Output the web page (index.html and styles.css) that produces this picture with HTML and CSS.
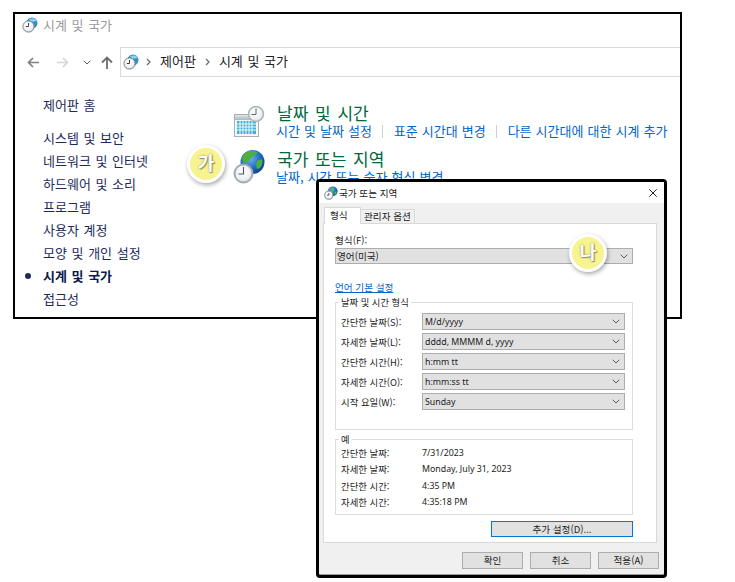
FILE: index.html
```html
<!DOCTYPE html>
<html lang="ko">
<head>
<meta charset="utf-8">
<title>시계 및 국가</title>
<link rel="stylesheet" href="styles.css">
</head>
<body>
<svg class="defs" width="0" height="0" aria-hidden="true">
  <defs>
    <radialGradient id="clockFace" cx="45%" cy="40%" r="65%"><stop offset="0" stop-color="#ffffff"/><stop offset="0.7" stop-color="#eceef0"/><stop offset="1" stop-color="#c4cacf"/></radialGradient>
    <radialGradient id="globeFill" cx="40%" cy="35%" r="70%"><stop offset="0" stop-color="#6fb6ee"/><stop offset="0.6" stop-color="#1f6cc4"/><stop offset="1" stop-color="#0c3c86"/></radialGradient>
    <linearGradient id="calHead" x1="0" y1="0" x2="0" y2="1"><stop offset="0" stop-color="#dfe6ea"/><stop offset="1" stop-color="#a9b8c0"/></linearGradient>
    <symbol id="miniClock" viewBox="0 0 16 16">
      <circle cx="10" cy="6" r="5.500" fill="#2f8fc4"/>
      <path d="M7 2.500a5.500 5.500 0 0 1 8 1.500L9 5z" fill="#8fd0ec"/>
      <circle cx="6.500" cy="9.500" r="5.600" fill="url(#clockFace)" stroke="#7d8588" stroke-width="1"/>
      <path d="M6.500 6v3.500H3.800" fill="none" stroke="#3c4347" stroke-width="1"/>
    </symbol>
    <symbol id="miniGlobe" viewBox="0 0 16 16">
      <circle cx="10" cy="6" r="5.500" fill="url(#globeFill)"/>
      <path d="M7 2.500c2-1 4-1 5 0l-2 2.500-2 .5zM12 7l2.500-1-.5 3-2 1z" fill="#58b548"/>
      <circle cx="5.500" cy="10.500" r="4.700" fill="url(#clockFace)" stroke="#7d8588" stroke-width="1"/>
      <path d="M5.500 8v2.500H3.500" fill="none" stroke="#3c4347" stroke-width="1"/>
    </symbol>
    <symbol id="chev" viewBox="0 0 8 5">
      <path d="M.7.700 4 4 7.300.700" fill="none" stroke="#5a5a5a" stroke-width="1"/>
    </symbol>
  </defs>
</svg>

<main class="canvas">
  <section class="panel-window">
    <header class="titlebar">
      <svg class="icon16" width="16" height="16"><use href="#miniClock"/></svg>
      <span class="title-text">시계 및 국가</span>
    </header>
    <nav class="navbar">
      <svg class="nav-arrow" width="12" height="11" viewBox="0 0 12 11"><path d="M12 5.500H2M6 1 1.500 5.500 6 10" fill="none" stroke="#808080" stroke-width="1.700"/></svg>
      <svg class="nav-arrow fwd" width="12" height="11" viewBox="0 0 12 11"><path d="M0 5.500h10M6 1l4.500 4.500L6 10" fill="none" stroke="#d6d6d6" stroke-width="1.700"/></svg>
      <svg class="nav-drop" width="8" height="5"><use href="#chev"/></svg>
      <svg class="nav-up" width="12" height="13" viewBox="0 0 12 13"><path d="M6 13V2M1 6.500l5-5 5 5" fill="none" stroke="#6e6e6e" stroke-width="1.800"/></svg>
      <div class="address">
        <svg class="icon16" width="16" height="16"><use href="#miniClock"/></svg>
        <svg class="crumb-sep" width="5" height="8" viewBox="0 0 5 8"><path d="M1 1l3 3-3 3" fill="none" stroke="#707070" stroke-width="1.300"/></svg>
        <span class="crumb">제어판</span>
        <svg class="crumb-sep" width="5" height="8" viewBox="0 0 5 8"><path d="M1 1l3 3-3 3" fill="none" stroke="#707070" stroke-width="1.300"/></svg>
        <span class="crumb">시계 및 국가</span>
      </div>
    </nav>
    <div class="panel-body">
      <aside class="sidebar">
        <a class="side-home">제어판 홈</a>
        <a class="side-item">시스템 및 보안</a>
        <a class="side-item">네트워크 및 인터넷</a>
        <a class="side-item">하드웨어 및 소리</a>
        <a class="side-item">프로그램</a>
        <a class="side-item">사용자 계정</a>
        <a class="side-item">모양 및 개인 설정</a>
        <a class="side-item current">시계 및 국가</a>
        <a class="side-item">접근성</a>
      </aside>
      <div class="categories">
        <div class="category">
          <svg class="cat-icon" width="34" height="36" viewBox="0 0 34 36">
            <rect x="1.500" y="11.500" width="24" height="22" fill="#f4f6f7" stroke="#a9afb2"/>
            <rect x="2" y="12" width="23" height="5" fill="url(#calHead)"/>
            <rect x="4" y="18" width="19" height="13" fill="#38b3d6"/>
            <path d="M7 18v13M10 18v13M13 18v13M16 18v13M19 18v13M4 21h19M4 24h19M4 27h19" stroke="#f4f6f7" stroke-width="1"/>
            <circle cx="23" cy="11" r="7.500" fill="url(#clockFace)" stroke="#aeb5ba" stroke-width="1.500"/>
            <path d="M23 5.500V11.500H18.500" fill="none" stroke="#5c6468" stroke-width="1"/>
          </svg>
          <div class="cat-text">
            <h2 class="cat-title">날짜 및 시간</h2>
            <div class="cat-links">
              <a>시간 및 날짜 설정</a><i class="sep"></i><a>표준 시간대 변경</a><i class="sep"></i><a>다른 시간대에 대한 시계 추가</a>
            </div>
          </div>
        </div>
        <div class="category">
          <svg class="cat-icon" width="34" height="36" viewBox="0 0 34 36">
            <circle cx="19.500" cy="13" r="12" fill="url(#globeFill)"/>
            <path d="M11 5c4-4 11-4 14-1-2 1-3 3-6 3 1 3-3 3-4 6-1 1-3 1-5 0-1-3-1-5 1-8zM24 12l5-2c1 3 0 6-2 9l-3 1c-1-3-1-6 0-8z" fill="#4faf3c"/>
            <circle cx="10.500" cy="24.500" r="9" fill="url(#clockFace)" stroke="#a4acb1" stroke-width="2"/>
            <path d="M10.500 18V25H5.500" fill="none" stroke="#4c5458" stroke-width="1.100"/>
          </svg>
          <div class="cat-text">
            <h2 class="cat-title">국가 또는 지역</h2>
            <div class="cat-links"><a>날짜, 시간 또는 숫자 형식 변경</a></div>
          </div>
        </div>
      </div>
    </div>
  </section>

  <section class="dialog">
    <header class="dlg-title">
      <svg class="icon14" width="14" height="14"><use href="#miniGlobe"/></svg>
      <span class="dlg-caption">국가 또는 지역</span>
      <svg class="dlg-close" width="8" height="8" viewBox="0 0 8 8"><path d="M.3.300l7.400 7.400M7.700.300L.3 7.700" stroke="#222" stroke-width="1"/></svg>
    </header>
    <div class="dlg-body">
      <div class="tabs">
        <span class="tab active">형식</span>
        <span class="tab">관리자 옵션</span>
      </div>
      <div class="tab-panel">
        <label class="fmt-label">형식(F):</label>
        <div class="combo wide"><span>영어(미국)</span><svg width="8" height="5"><use href="#chev"/></svg></div>
        <a class="lang-link">언어 기본 설정</a>
        <fieldset class="group fmt-group">
          <legend>날짜 및 시간 형식</legend>
          <div class="fmt-row"><span class="k">간단한 날짜(S):</span><div class="combo"><span class="v">M/d/yyyy</span><svg width="8" height="5"><use href="#chev"/></svg></div></div>
          <div class="fmt-row"><span class="k">자세한 날짜(L):</span><div class="combo"><span class="v">dddd, MMMM d, yyyy</span><svg width="8" height="5"><use href="#chev"/></svg></div></div>
          <div class="fmt-row"><span class="k">간단한 시간(H):</span><div class="combo"><span class="v">h:mm tt</span><svg width="8" height="5"><use href="#chev"/></svg></div></div>
          <div class="fmt-row"><span class="k">자세한 시간(O):</span><div class="combo"><span class="v">h:mm:ss tt</span><svg width="8" height="5"><use href="#chev"/></svg></div></div>
          <div class="fmt-row"><span class="k">시작 요일(W):</span><div class="combo"><span class="v">Sunday</span><svg width="8" height="5"><use href="#chev"/></svg></div></div>
        </fieldset>
        <fieldset class="group ex-group">
          <legend>예</legend>
          <div class="ex-row"><span class="k">간단한 날짜:</span><span class="v">7/31/2023</span></div>
          <div class="ex-row"><span class="k">자세한 날짜:</span><span class="v">Monday, July 31, 2023</span></div>
          <div class="ex-row"><span class="k">간단한 시간:</span><span class="v">4:35 PM</span></div>
          <div class="ex-row"><span class="k">자세한 시간:</span><span class="v">4:35:18 PM</span></div>
        </fieldset>
        <div class="extra-row"><button class="btn extra">추가 설정(D)...</button></div>
      </div>
      <div class="dlg-actions">
        <button class="btn">확인</button>
        <button class="btn">취소</button>
        <button class="btn">적용(A)</button>
      </div>
    </div>
  </section>

  <span class="badge badge-ga">가</span>
  <span class="badge badge-na">나</span>
</main>
</body>
</html>
```

FILE: styles.css
```css
* { box-sizing: border-box; }
html, body { margin: 0; padding: 0; background: #fff; }
body { font-family: "Noto Sans CJK KR", sans-serif; color: #111; overflow: hidden; }
.defs { position: absolute; }
.canvas { position: relative; width: 735px; height: 582px; overflow: hidden; }

/* control panel window */
.panel-window {
  position: absolute; left: 13px; top: 12px; width: 669px; height: 307px;
  border: 2px solid #000; background: #fff;
  font-size: 13px; word-spacing: 1px;
}
.titlebar { height: 33px; display: flex; align-items: center; padding: 0 0 11px 7px; gap: 5px; }
.title-text { color: #9a9a9a; line-height: 20px; }
.icon16 { display: block; flex: none; }
.navbar { height: 30px; display: flex; align-items: center; padding-left: 12px; }
.nav-arrow { margin-right: 18px; flex: none; }
.nav-arrow.fwd { margin-right: 14px; }
.nav-drop { margin-right: 10px; flex: none; }
.nav-up { flex: none; margin-right: 7px; }
.address {
  flex: 1; height: 30px; border: 1px solid #d9d9d9; border-right: 0;
  display: flex; align-items: center; padding-left: 2px; color: #222;
}
.crumb { line-height: 20px; padding-bottom: 2px; }
.crumb-sep { flex: none; margin: 0 9px 0 7px; }
.crumb + .crumb-sep { margin-left: 9px; }
.panel-body { display: grid; grid-template-columns: 218px 1fr; }
.sidebar { padding: 16px 0 0 28px; display: flex; flex-direction: column; }
.sidebar a { line-height: 23px; color: #1c2a5c; white-space: nowrap; }
.side-home { margin-bottom: 10px; }
.sidebar .current { font-weight: 700; color: #0b1a4a; }
.current::before {
  content: ""; display: inline-block; width: 6px; height: 6px; border-radius: 50%;
  background: #1c2a5c; margin: 0 12px 2px -18px; vertical-align: middle;
}
.categories { padding-top: 26px; display: flex; flex-direction: column; gap: 10px; }
.category { display: flex; gap: 10px; }
.cat-icon { flex: none; }
.cat-text { min-width: 0; }
.cat-title { margin: 0; font-size: 17px; font-weight: 400; line-height: 20px; color: #00683a; word-spacing: 2px; }
.cat-links { display: flex; align-items: center; line-height: 16px; color: #0066cc; white-space: nowrap; word-spacing: .4px; margin-left: -1px; }
.sep { display: block; width: 1px; height: 13px; background: #cfcfcf; margin: 0 10.500px; }

/* dialog */
.dialog {
  position: absolute; left: 316px; top: 179px; width: 351px; height: 399px;
  border: 3px solid #000; border-radius: 4px; background: #f0f0f0;
  box-shadow: inset 0 -1px 0 #9a9a9a;
  font-size: 9.600px; line-height: 14px; color: #222;
  display: flex; flex-direction: column;
}
.dlg-title { height: 21px; background: #fff; flex: none; display: flex; align-items: center; padding: 0 7px 0 5px; gap: 1px; }
.icon14 { display: block; flex: none; }
.dlg-caption { flex: 1; }
.dlg-close { flex: none; }
.dlg-body { flex: 1; padding: 5px 7px 0 4px; display: flex; flex-direction: column; }
.tabs { display: flex; align-items: flex-end; height: 15px; padding-left: 1px; flex: none; position: relative; z-index: 1; }
.tab { height: 14px; padding: 0 3px; border: 1px solid #d9d9d9; border-bottom: 0; background: #f0f0f0; line-height: 13px; margin-left: -1px; }
.tab.active { height: 17px; width: 37px; padding: 1px 0 0 5px; background: #fff; margin-bottom: -1px; margin-left: 0; }
.tab-panel {
  height: 320px; flex: none; background: #fff; border: 1px solid #d9d9d9;
  padding: 9px 23px 0 11px; display: flex; flex-direction: column;
}
.fmt-label { line-height: 14px; margin-bottom: 1px; }
.combo {
  display: flex; align-items: center; justify-content: space-between;
  height: 17px; background: #e1e1e1; border: 1px solid #adadad; padding: 0 4px 0 2px;
}
.combo svg { flex: none; }
.combo.wide { height: 16px; margin-bottom: 16px; padding-left: 1px; }
.lang-link { color: #0066cc; text-decoration: underline; line-height: 14px; margin-bottom: 2px; align-self: flex-start; }
.group { border: 1px solid #dcdcdc; margin: 0; min-width: 0; padding: 0 7px 0 5px; }
.group legend { padding: 0 2px; margin-left: -2px; line-height: 12px; font-size: 9.300px; }
.k { font-size: 9.400px; }
.fmt-group { height: 134px; margin-bottom: 3px; padding-top: 5px; }
.fmt-row { display: grid; grid-template-columns: 81px 1fr; align-items: center; margin-bottom: 3px; }
.ex-group { height: 82px; margin-bottom: 6px; }
.ex-row { display: grid; grid-template-columns: 81px 1fr; line-height: 16.330px; align-items: center; }
.v { font-family: "Noto Sans", "Noto Sans CJK KR", sans-serif; font-size: 8.800px; }
.extra-row { display: flex; justify-content: flex-end; }
.btn {
  height: 17px; width: 61px; padding: 0; background: #e1e1e1; border: 1px solid #adadad;
  font: inherit; line-height: 13px; color: #222;
}
.extra { width: 142px; height: 16px; border-color: #0078d7; }
.dlg-actions { display: flex; justify-content: flex-end; gap: 7px; margin-top: 9px; margin-right: -2px; }

/* callouts */
.badge {
  position: absolute; width: 38px; height: 38px; border-radius: 50%;
  background: #f7f38e; border: 3px solid #fff;
  box-shadow: 1px 2px 4px rgba(0,0,0,.35);
  color: #fff; font-weight: 700; font-size: 18px; line-height: 29px; text-align: center;
  text-shadow: 0 0 2px #8a8a60, 1px 1px 1px #8a8a60;
}
.badge-ga { left: 187px; top: 145px; }
.badge-na { left: 569px; top: 234px; }
```
